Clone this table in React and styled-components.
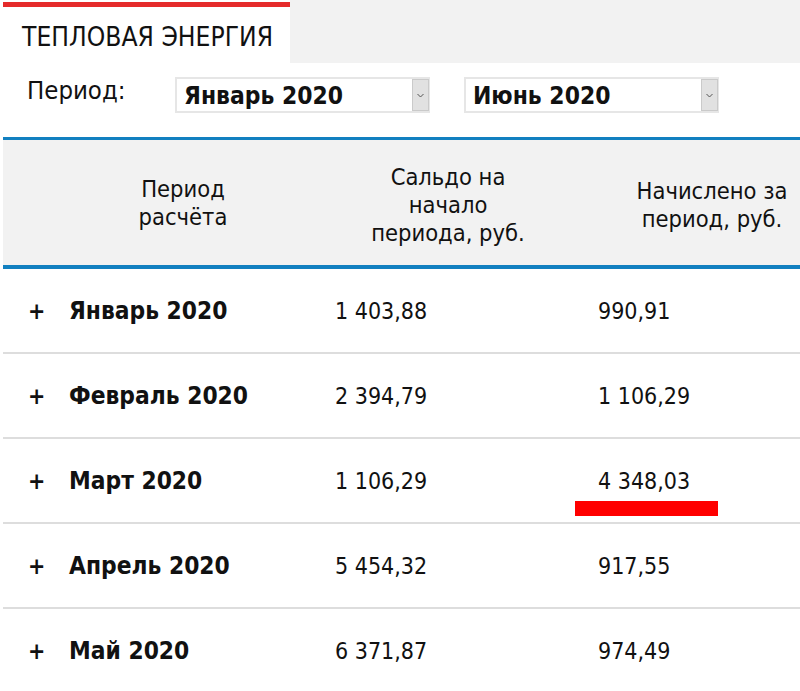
import React from "react";
import styled, { createGlobalStyle } from "styled-components";

const GlobalStyle = createGlobalStyle`
  html, body {
    margin: 0;
    padding: 0;
    background: #ffffff;
    overflow: hidden;
  }
  body {
    font-family: "DejaVu Sans Condensed", "DejaVu Sans", Verdana, sans-serif;
    font-stretch: condensed;
    color: #111111;
  }
`;

const Page = styled.div`
  padding-left: 3px;
  width: 797px;
  overflow: hidden;
`;

const TabBar = styled.div`
  display: flex;
  height: 63px;
`;

const Tab = styled.div`
  width: 287px;
  margin-top: 2px;
  border-top: 5px solid #e52b2b;
  background: #ffffff;
  box-sizing: border-box;
  padding: 15px 0 0 19px;
  font-size: 26.2px;
  color: #111111;
  white-space: nowrap;
`;

const TabFiller = styled.div`
  flex: 1;
  background: #f2f2f2;
`;

const FilterRow = styled.div`
  display: flex;
  align-items: center;
  height: 52px;
  margin-top: 6px;
`;

const FilterLabel = styled.span`
  width: 172px;
  padding-left: 24px;
  box-sizing: border-box;
  font-size: 25.5px;
  margin-top: -10px;
`;

const SelectBox = styled.div`
  display: flex;
  width: 255px;
  height: 36px;
  box-sizing: border-box;
  border: 2px solid #e6e6e6;
  margin-right: ${(p) => p.$gap || 0}px;
  background: #ffffff;
`;

const SelectValue = styled.div`
  flex: 1;
  font-weight: bold;
  font-size: 24.4px;
  line-height: 34px;
  padding-left: 7px;
  white-space: nowrap;
`;

const SelectButton = styled.div`
  width: 15px;
  background: #e1e1e1;
  border: 1px solid #cacaca;
  display: flex;
  align-items: center;
  justify-content: center;
  margin-right: -1px;
`;

const Table = styled.div`
  margin-top: 16px;
  border-top: 3px solid #1280c0;
`;

const Header = styled.div`
  display: grid;
  grid-template-columns: 360px 170px 358px;
  height: 125px;
  background: #f2f2f2;
  border-bottom: 4px solid #1280c0;
`;

const HeaderCell = styled.div`
  display: flex;
  align-items: center;
  justify-content: center;
  text-align: center;
  font-size: 23.5px;
  line-height: 28px;
  color: #111111;
  white-space: nowrap;
  padding-top: ${(p) => p.$shift || 0}px;
`;

const Row = styled.div`
  display: grid;
  grid-template-columns: 66px 266px 263px 1fr;
  align-items: center;
  height: 83px;
  border-bottom: 2px solid #dddddd;
`;

const Plus = styled.span`
  padding-left: 25px;
  font-weight: bold;
  font-size: 23px;
`;

const Name = styled.span`
  font-weight: bold;
  font-size: 24.3px;
  white-space: nowrap;
`;

const Value = styled.span`
  position: relative;
  font-size: 23px;
  white-space: nowrap;
`;

const Marker = styled.span`
  position: absolute;
  left: -23px;
  top: 33px;
  width: 143px;
  height: 15px;
  background: #ff0000;
`;

const rows = [
  { name: "Январь 2020", start: "1 403,88", charged: "990,91" },
  { name: "Февраль 2020", start: "2 394,79", charged: "1 106,29" },
  { name: "Март 2020", start: "1 106,29", charged: "4 348,03", mark: true },
  { name: "Апрель 2020", start: "5 454,32", charged: "917,55" },
  { name: "Май 2020", start: "6 371,87", charged: "974,49" },
];

const Chevron = () => (
  <svg width="7" height="5" viewBox="0 0 7 5">
    <path d="M0.5 1 L3.5 4 L6.5 1" fill="none" stroke="#555" strokeWidth="1" />
  </svg>
);

const Select = ({ value, gap }) => (
  <SelectBox $gap={gap}>
    <SelectValue>{value}</SelectValue>
    <SelectButton>
      <Chevron />
    </SelectButton>
  </SelectBox>
);

export default function App() {
  return (
    <>
      <GlobalStyle />
      <Page>
        <TabBar>
          <Tab>ТЕПЛОВАЯ ЭНЕРГИЯ</Tab>
          <TabFiller />
        </TabBar>

        <FilterRow>
          <FilterLabel>Период:</FilterLabel>
          <Select value="Январь 2020" gap={34} />
          <Select value="Июнь 2020" />
        </FilterRow>

        <Table>
          <Header>
            <HeaderCell>
              Период
              <br />
              расчёта
            </HeaderCell>
            <HeaderCell $shift={4}>
              Сальдо на
              <br />
              начало
              <br />
              периода, руб.
            </HeaderCell>
            <HeaderCell $shift={4}>
              Начислено за
              <br />
              период, руб.
            </HeaderCell>
          </Header>

          {rows.map((r) => (
            <Row key={r.name}>
              <Plus>+</Plus>
              <Name>{r.name}</Name>
              <Value>{r.start}</Value>
              <Value>
                {r.charged}
                {r.mark && <Marker />}
              </Value>
            </Row>
          ))}
        </Table>
      </Page>
    </>
  );
}
